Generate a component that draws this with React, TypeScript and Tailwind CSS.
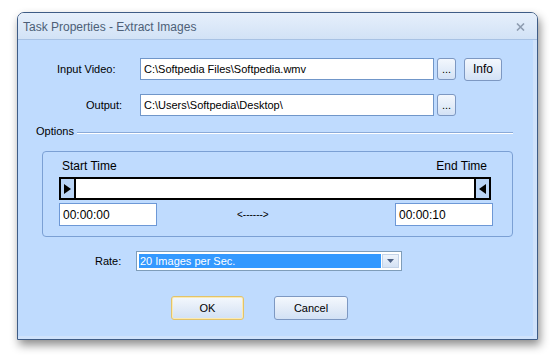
import React from 'react'

const font = "font-['Liberation_Sans',Arial,sans-serif]"

const SmallButton: React.FC<{ label: string; w: string; h?: string; extra?: string }> = ({ label, w, h = 'h-[22px]', extra = '' }) => (
  <div
    className={`${w} ${h} ${extra} flex items-center justify-center rounded-[3px] border border-[#7d98c2] bg-gradient-to-b from-[#f3f7fd] via-[#e4edf9] to-[#d3e2f6] text-[11px] text-black`}
  >
    {label}
  </div>
)

export default function App() {
  return (
    <div className={`w-[558px] h-[360px] bg-white pt-[12px] pl-[17px] ${font}`}>
      <div className="w-[521px] h-[328px] flex flex-col border border-[#3e5c86] rounded-t-[7px] overflow-hidden shadow-[2px_5px_10px_rgba(0,0,0,0.45)]">
        {/* Title bar */}
        <div className="h-[27px] shrink-0 flex items-center justify-between pt-[2px] pl-[5px] pr-[12px] bg-gradient-to-b from-[#e6effb] to-[#d2e2f6] border-b border-[#a8c2e4]">
          <span className="text-[12px] text-[#4d5f77]">Task Properties - Extract Images</span>
          <svg width="9" height="8" viewBox="0 0 9 8">
            <path d="M1 0.5 L8 7.5 M8 0.5 L1 7.5" stroke="#8e9cb0" strokeWidth="1.6" />
          </svg>
        </div>

        {/* Body */}
        <div className="flex-1 bg-[#bfdbfe] border-r-[4px] border-b-[3px] border-[#cfe2fb] text-[11px] text-black">
          {/* Input video */}
          <div className="flex items-center mt-[18px] h-[22px]">
            <div className="w-[122px] pl-[39px]">Input Video:</div>
            <div className="w-[294px] h-[22px] flex items-center pl-[3px] bg-white border border-[#7096c9]">
              C:\Softpedia Files\Softpedia.wmv
            </div>
            <SmallButton label="..." w="w-[19px]" extra="ml-[3px]" />
            <SmallButton label="Info" w="w-[38px]" h="h-[23px]" extra="ml-[8px] text-[12px]" />
          </div>

          {/* Output */}
          <div className="flex items-center mt-[14px] h-[22px]">
            <div className="w-[122px] pl-[68px]">Output:</div>
            <div className="w-[294px] h-[22px] flex items-center pl-[3px] bg-white border border-[#7096c9]">
              C:\Users\Softpedia\Desktop\
            </div>
            <SmallButton label="..." w="w-[19px]" extra="ml-[3px]" />
          </div>

          {/* Options */}
          <div className="flex items-center mt-[8px] h-[14px] pl-[18px] mr-[20px]">
            <span>Options</span>
            <div className="flex-1 ml-[3px] mt-[3px] border-t border-[#8aaad8] border-b border-b-white" />
          </div>

          {/* Group box */}
          <div className="ml-[24px] mt-[13px] w-[471px] h-[86px] border border-[#7ba0d4] rounded-[4px] pl-[16px] pr-[20px]">
            <div className="flex justify-between items-center h-[14px] mt-[7px] pl-[3px] pr-[5px] text-[12px]">
              <span>Start Time</span>
              <span>End Time</span>
            </div>
            <div className="mt-[4px] h-[23px] w-[432px] flex border-2 border-black bg-white">
              <div className="w-[15px] h-full flex items-center justify-center bg-[#b9d4f6] border-r-2 border-black">
                <svg width="7" height="10" viewBox="0 0 7 10">
                  <polygon points="0,0 7,5 0,10" fill="#000" />
                </svg>
              </div>
              <div className="flex-1" />
              <div className="w-[15px] h-full flex items-center justify-center bg-[#b9d4f6] border-l-2 border-black">
                <svg width="7" height="10" viewBox="0 0 7 10">
                  <polygon points="7,0 0,5 7,10" fill="#000" />
                </svg>
              </div>
            </div>
            <div className="mt-[3px] h-[23px] flex items-center">
              <div className="w-[98px] h-[23px] flex items-center pl-[3px] bg-white border border-[#6d98d6] text-[12px]">
                00:00:00
              </div>
              <span className="ml-[80px] text-[10px]">&lt;------&gt;</span>
              <div className="ml-auto mr-[-1px] w-[98px] h-[23px] flex items-center pl-[3px] bg-white border border-[#6d98d6] text-[12px]">
                00:00:10
              </div>
            </div>
          </div>

          {/* Rate */}
          <div className="flex items-center mt-[14px] h-[20px]">
            <div className="w-[118px] pl-[77px]">Rate:</div>
            <div className="w-[266px] h-[20px] flex p-[2px] bg-white border border-[#7f9db9]">
              <div className="flex-1 flex items-center pl-[1px] bg-[#3399ff] text-white">20 Images per Sec.</div>
              <div className="w-[17px] ml-[1px] flex items-center justify-center bg-gradient-to-b from-[#eef4fc] to-[#d4e2f4] border border-[#c3d3e8]">
                <svg width="7" height="4" viewBox="0 0 7 4">
                  <polygon points="0,0 7,0 3.5,4" fill="#4d6185" />
                </svg>
              </div>
            </div>
          </div>

          {/* Buttons */}
          <div className="flex items-center mt-[25px]">
            <div className="ml-[153px] w-[73px] h-[24px] flex items-center justify-center rounded-[3px] border border-[#e2c36a] bg-gradient-to-b from-[#f4f8fd] via-[#e3ecf8] to-[#d2e1f5] shadow-[inset_0_0_0_1px_#fbeab4]">
              OK
            </div>
            <div className="ml-[30px] w-[74px] h-[24px] flex items-center justify-center rounded-[3px] border border-[#7d98c2] bg-gradient-to-b from-[#f4f8fd] via-[#e3ecf8] to-[#d2e1f5]">
              Cancel
            </div>
          </div>
        </div>
      </div>
    </div>
  )
}
